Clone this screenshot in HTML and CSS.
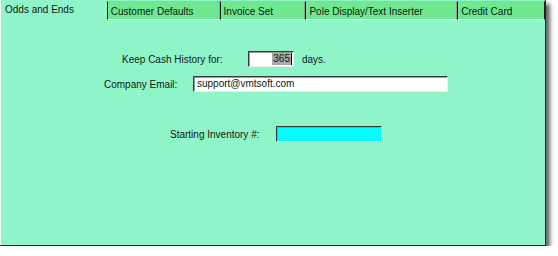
FILE: index.html
```html
<!DOCTYPE html>
<html lang="en">
<head>
  <meta charset="UTF-8" />
  <title>Odds and Ends</title>
  <link rel="stylesheet" href="styles.css">
</head>
<body>
  <div class="window">
    <div class="tabs">
      <div class="tab active">Odds and Ends</div>
      <div class="tab tab-customer">Customer Defaults</div>
      <div class="tab tab-invoice">Invoice Set</div>
      <div class="tab tab-pole">Pole Display/Text Inserter</div>
      <div class="tab tab-credit">Credit Card</div>
    </div>

    <div class="page">
      <div class="row row-cash">
        <label>Keep Cash History for:</label>
        <div class="field field-days"><span class="sel">365</span><span class="caret"></span></div>
        <span class="unit">days.</span>
      </div>
      <div class="row row-email">
        <label>Company Email:</label>
        <div class="field field-email">support@vmtsoft.com</div>
      </div>
      <div class="row row-inv">
        <label>Starting Inventory #:</label>
        <div class="field field-inv"></div>
      </div>
    </div>
  </div>
</body>
</html>
```

FILE: styles.css
```css
body {
  margin: 0;
  background: #fff;
  font-family: 'Liberation Sans', Arial, sans-serif;
  font-size: 10px;
  color: #0c1a12;
}
.window {
  width: 545px;
  height: 245px;
  background: #8ff5c9;
  border-right: 1px solid #2a2a2a;
  border-bottom: 1px solid #2a2a2a;
  box-shadow: 4px 4px 4px rgba(0, 0, 0, 0.6);
  display: flex;
  flex-direction: column;
}
.tabs {
  display: flex;
  height: 19px;
}
.tab {
  box-sizing: border-box;
  height: 19px;
  margin-top: 1px;
  padding: 4px 0 0 3px;
  background: #6fe890;
  border-left: 1px solid #1c1c1c;
  border-top: 1px solid #b8b8b8;
  border-right: 1px solid #9a9a9a;
  border-bottom: 1px solid #f4fff8;
  white-space: nowrap;
}
.tab.active {
  width: 107px;
  margin-top: 0;
  padding: 4px 0 0 4px;
  background: transparent;
  border: none;
  border-left: 1px solid #f4fff8;
}
.tab-customer { width: 113px; }
.tab-invoice { width: 86px; }
.tab-pole { width: 152px; }
.tab-credit { width: 88px; border-right: 1px solid #1c1c1c; }
.page {
  flex: 1;
  border-left: 1px solid #f4fff8;
  padding-top: 32px;
}
.row {
  display: flex;
  align-items: center;
  height: 16px;
}
.row-cash { padding-left: 121px; }
.row-cash label { width: 126px; }
.row-email { padding-left: 103px; margin-top: 9px; }
.row-email label { width: 89px; }
.row-inv { padding-left: 169px; margin-top: 34px; }
.row-inv label { width: 106px; }
.field {
  box-sizing: border-box;
  height: 16px;
  background: #fff;
  border-top: 1px solid #3a3a3a;
  border-left: 1px solid #3a3a3a;
  border-right: 1px solid #e8f0ec;
  border-bottom: 1px solid #e8f0ec;
  box-shadow: inset 1px 1px 0 #9a9a9a;
  padding: 1px 3px;
  line-height: 12px;
}
.field-days {
  width: 46px;
  display: flex;
  justify-content: flex-end;
  padding: 1px 1px 1px 2px;
}
.sel {
  background: #a9a9a9;
  padding: 0 1px;
}
.caret {
  width: 1px;
  height: 12px;
  background: #000;
}
.unit { margin-left: 8px; }
.field-email { width: 255px; }
.field-inv {
  width: 106px;
  background: #00ffff;
}
```
